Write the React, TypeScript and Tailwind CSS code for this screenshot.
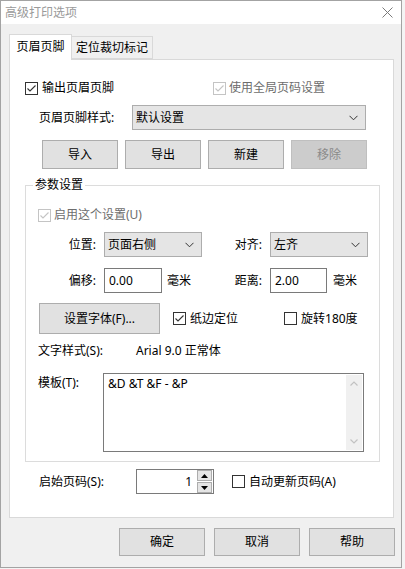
import React from "react";

const font = { fontFamily: '"Noto Sans", "Noto Sans CJK SC", sans-serif' };

function Check({ checked, disabled }: { checked?: boolean; disabled?: boolean }) {
  const c = disabled ? "#c4c4c4" : "#333333";
  return (
    <span
      className="inline-flex h-[13px] w-[13px] shrink-0 items-center justify-center border bg-white"
      style={{ borderColor: c }}
    >
      {checked && (
        <svg width="11" height="11" viewBox="0 0 11 11">
          <polyline points="1.5,5.5 4,8 9.5,2.5" fill="none" stroke={c} strokeWidth="1.1" />
        </svg>
      )}
    </span>
  );
}

function Chevron() {
  return (
    <svg width="9" height="6" viewBox="0 0 9 6">
      <polyline points="0.5,0.8 4.5,4.8 8.5,0.8" fill="none" stroke="#333" strokeWidth="1" />
    </svg>
  );
}

function Select({ value, w }: { value: string; w: string }) {
  return (
    <div
      className={`flex h-[25px] ${w} items-center justify-between border border-[#adadad] bg-[#e5e5e5] pl-[3px] pr-[7px] text-[12px] text-black`}
    >
      <span>{value}</span>
      <Chevron />
    </div>
  );
}

function Btn({ label, w, h, disabled }: { label: string; w: string; h: string; disabled?: boolean }) {
  return (
    <div
      className={`flex ${w} ${h} items-center justify-center border text-[12px] ${
        disabled ? "border-[#bfbfbf] bg-[#cccccc] text-[#8a8a8a]" : "border-[#adadad] bg-[#e1e1e1] text-black"
      }`}
    >
      {label}
    </div>
  );
}

export default function App() {
  return (
    <div className="h-[569px] w-[405px] bg-[#f4f4f4] text-[12px] leading-none" style={font}>
      <div className="flex h-[568px] w-[402px] flex-col border border-[#a3a3a3] bg-[#f0f0f0]">
        {/* title bar */}
        <div className="flex h-[23px] items-center justify-between bg-white pl-[4px] pr-[8px]">
          <span className="text-[12px] text-[#9a9a9a]">高级打印选项</span>
          <svg width="11" height="11" viewBox="0 0 11 11">
            <path d="M0.5 0.5 L10.5 10.5 M10.5 0.5 L0.5 10.5" stroke="#7a7a7a" strokeWidth="1" />
          </svg>
        </div>

        {/* tabs */}
        <div className="ml-[8px] mt-[10px] flex items-end">
          <div className="relative z-10 mb-[-1px] flex h-[26px] w-[63px] items-center justify-center border border-b-0 border-[#d9d9d9] bg-white pb-[2px] text-black">
            页眉页脚
          </div>
          <div className="flex h-[23px] w-[81px] items-center justify-center border border-l-0 border-[#d9d9d9] bg-[#f0f0f0] pt-[1px] text-black">
            定位裁切标记
          </div>
        </div>

        {/* panel */}
        <div className="ml-[8px] flex h-[459px] w-[385px] flex-col border border-[#d9d9d9] bg-white pt-[20px]">
          {/* row 1 */}
          <div className="flex h-[16px] items-center">
            <div className="ml-[15px] flex items-center gap-[4px]">
              <Check checked />
              <span className="text-black">输出页眉页脚</span>
            </div>
            <div className="ml-[99px] flex items-center gap-[3px]">
              <Check checked disabled />
              <span className="text-[#6d6d6d]">使用全局页码设置</span>
            </div>
          </div>

          {/* row 2 */}
          <div className="mt-[9px] flex items-center">
            <span className="ml-[29px] w-[93px] text-black">页眉页脚样式:</span>
            <Select value="默认设置" w="w-[234px]" />
          </div>

          {/* row 3 */}
          <div className="ml-[32px] mt-[10px] flex gap-[7px]">
            <Btn label="导入" w="w-[76px]" h="h-[29px]" />
            <Btn label="导出" w="w-[76px]" h="h-[29px]" />
            <Btn label="新建" w="w-[76px]" h="h-[29px]" />
            <Btn label="移除" w="w-[76px]" h="h-[29px]" disabled />
          </div>

          {/* group box */}
          <div className="relative ml-[15px] mt-[16px] flex h-[277px] w-[355px] flex-col border border-[#dcdcdc] pt-[21px]">
            <span className="absolute left-[7px] top-[-7px] bg-white px-[2px] text-black">参数设置</span>

            <div className="ml-[12px] flex h-[16px] items-center gap-[3px]">
              <Check checked disabled />
              <span className="text-[#6d6d6d]">启用这个设置(U)</span>
            </div>

            <div className="ml-[13px] mt-[9px] flex items-center">
              <span className="w-[58px] pr-[1px] text-right text-black">位置:</span>
              <span className="ml-[7px]">
                <Select value="页面右侧" w="w-[98px]" />
              </span>
              <span className="w-[61px] pr-[1px] text-right text-black">对齐:</span>
              <span className="ml-[7px]">
                <Select value="左齐" w="w-[98px]" />
              </span>
            </div>

            <div className="ml-[13px] mt-[11px] flex items-center">
              <span className="w-[58px] pr-[1px] text-right text-black">偏移:</span>
              <div className="ml-[7px] flex h-[25px] w-[58px] items-center border border-[#7a7a7a] bg-white pl-[4px] text-black">
                0.00
              </div>
              <span className="ml-[5px] w-[35px] text-black">毫米</span>
              <span className="w-[61px] whitespace-nowrap pr-[1px] text-right text-black">距离:</span>
              <div className="ml-[7px] flex h-[25px] w-[57px] items-center border border-[#7a7a7a] bg-white pl-[4px] text-black">
                2.00
              </div>
              <span className="ml-[6px] text-black">毫米</span>
            </div>

            <div className="ml-[13px] mt-[10px] flex items-center">
              <Btn label="设置字体(F)..." w="w-[121px]" h="h-[31px]" />
              <div className="ml-[13px] flex items-center gap-[4px]">
                <Check checked />
                <span className="text-black">纸边定位</span>
              </div>
              <div className="ml-[46px] flex items-center gap-[4px]">
                <Check />
                <span className="text-black">旋转180度</span>
              </div>
            </div>

            <div className="ml-[12px] mt-[9px] flex h-[16px] items-center">
              <span className="w-[98px] text-black">文字样式(S):</span>
              <span className="text-black">Arial 9.0 正常体</span>
            </div>

            <div className="ml-[12px] mt-[14px] flex items-start">
              <span className="mt-[4px] w-[65px] text-black">模板(T):</span>
              <div className="flex h-[79px] w-[261px] border border-[#7a7a7a] bg-white">
                <div className="flex-1 pl-[4px] pt-[4px] text-black">&amp;D &amp;T &amp;F - &amp;P</div>
                <div className="my-[1px] mr-[1px] flex w-[16px] flex-col items-center justify-between bg-[#f0f0f0] py-[6px]">
                  <svg width="8" height="5" viewBox="0 0 8 5">
                    <polyline points="0.5,4.5 4,1 7.5,4.5" fill="none" stroke="#c2c2c2" strokeWidth="1.2" />
                  </svg>
                  <svg width="8" height="5" viewBox="0 0 8 5">
                    <polyline points="0.5,0.5 4,4 7.5,0.5" fill="none" stroke="#c2c2c2" strokeWidth="1.2" />
                  </svg>
                </div>
              </div>
            </div>
          </div>

          {/* start page row */}
          <div className="mt-[7px] flex items-center">
            <span className="ml-[29px] w-[97px] text-black">启始页码(S):</span>
            <div className="flex h-[25px] w-[78px] items-center border border-[#7a7a7a] bg-white">
              <span className="flex-1 pr-[5px] text-right text-black">1</span>
              <div className="mr-[1px] flex h-[23px] w-[15px] flex-col">
                <div className="flex h-[11px] items-center justify-center border border-[#adadad] bg-[#e5e5e5]">
                  <svg width="7" height="4" viewBox="0 0 7 4">
                    <polygon points="3.5,0 7,4 0,4" fill="#000" />
                  </svg>
                </div>
                <div className="mt-[1px] flex h-[11px] items-center justify-center border border-[#adadad] bg-[#e5e5e5]">
                  <svg width="7" height="4" viewBox="0 0 7 4">
                    <polygon points="0,0 7,0 3.5,4" fill="#000" />
                  </svg>
                </div>
              </div>
            </div>
            <div className="ml-[18px] flex items-center gap-[4px]">
              <Check />
              <span className="text-black">自动更新页码(A)</span>
            </div>
          </div>
        </div>

        {/* bottom buttons */}
        <div className="ml-[118px] mt-[10px] flex gap-[9px]">
          <Btn label="确定" w="w-[86px]" h="h-[28px]" />
          <Btn label="取消" w="w-[86px]" h="h-[28px]" />
          <Btn label="帮助" w="w-[86px]" h="h-[28px]" />
        </div>
      </div>
    </div>
  );
}
